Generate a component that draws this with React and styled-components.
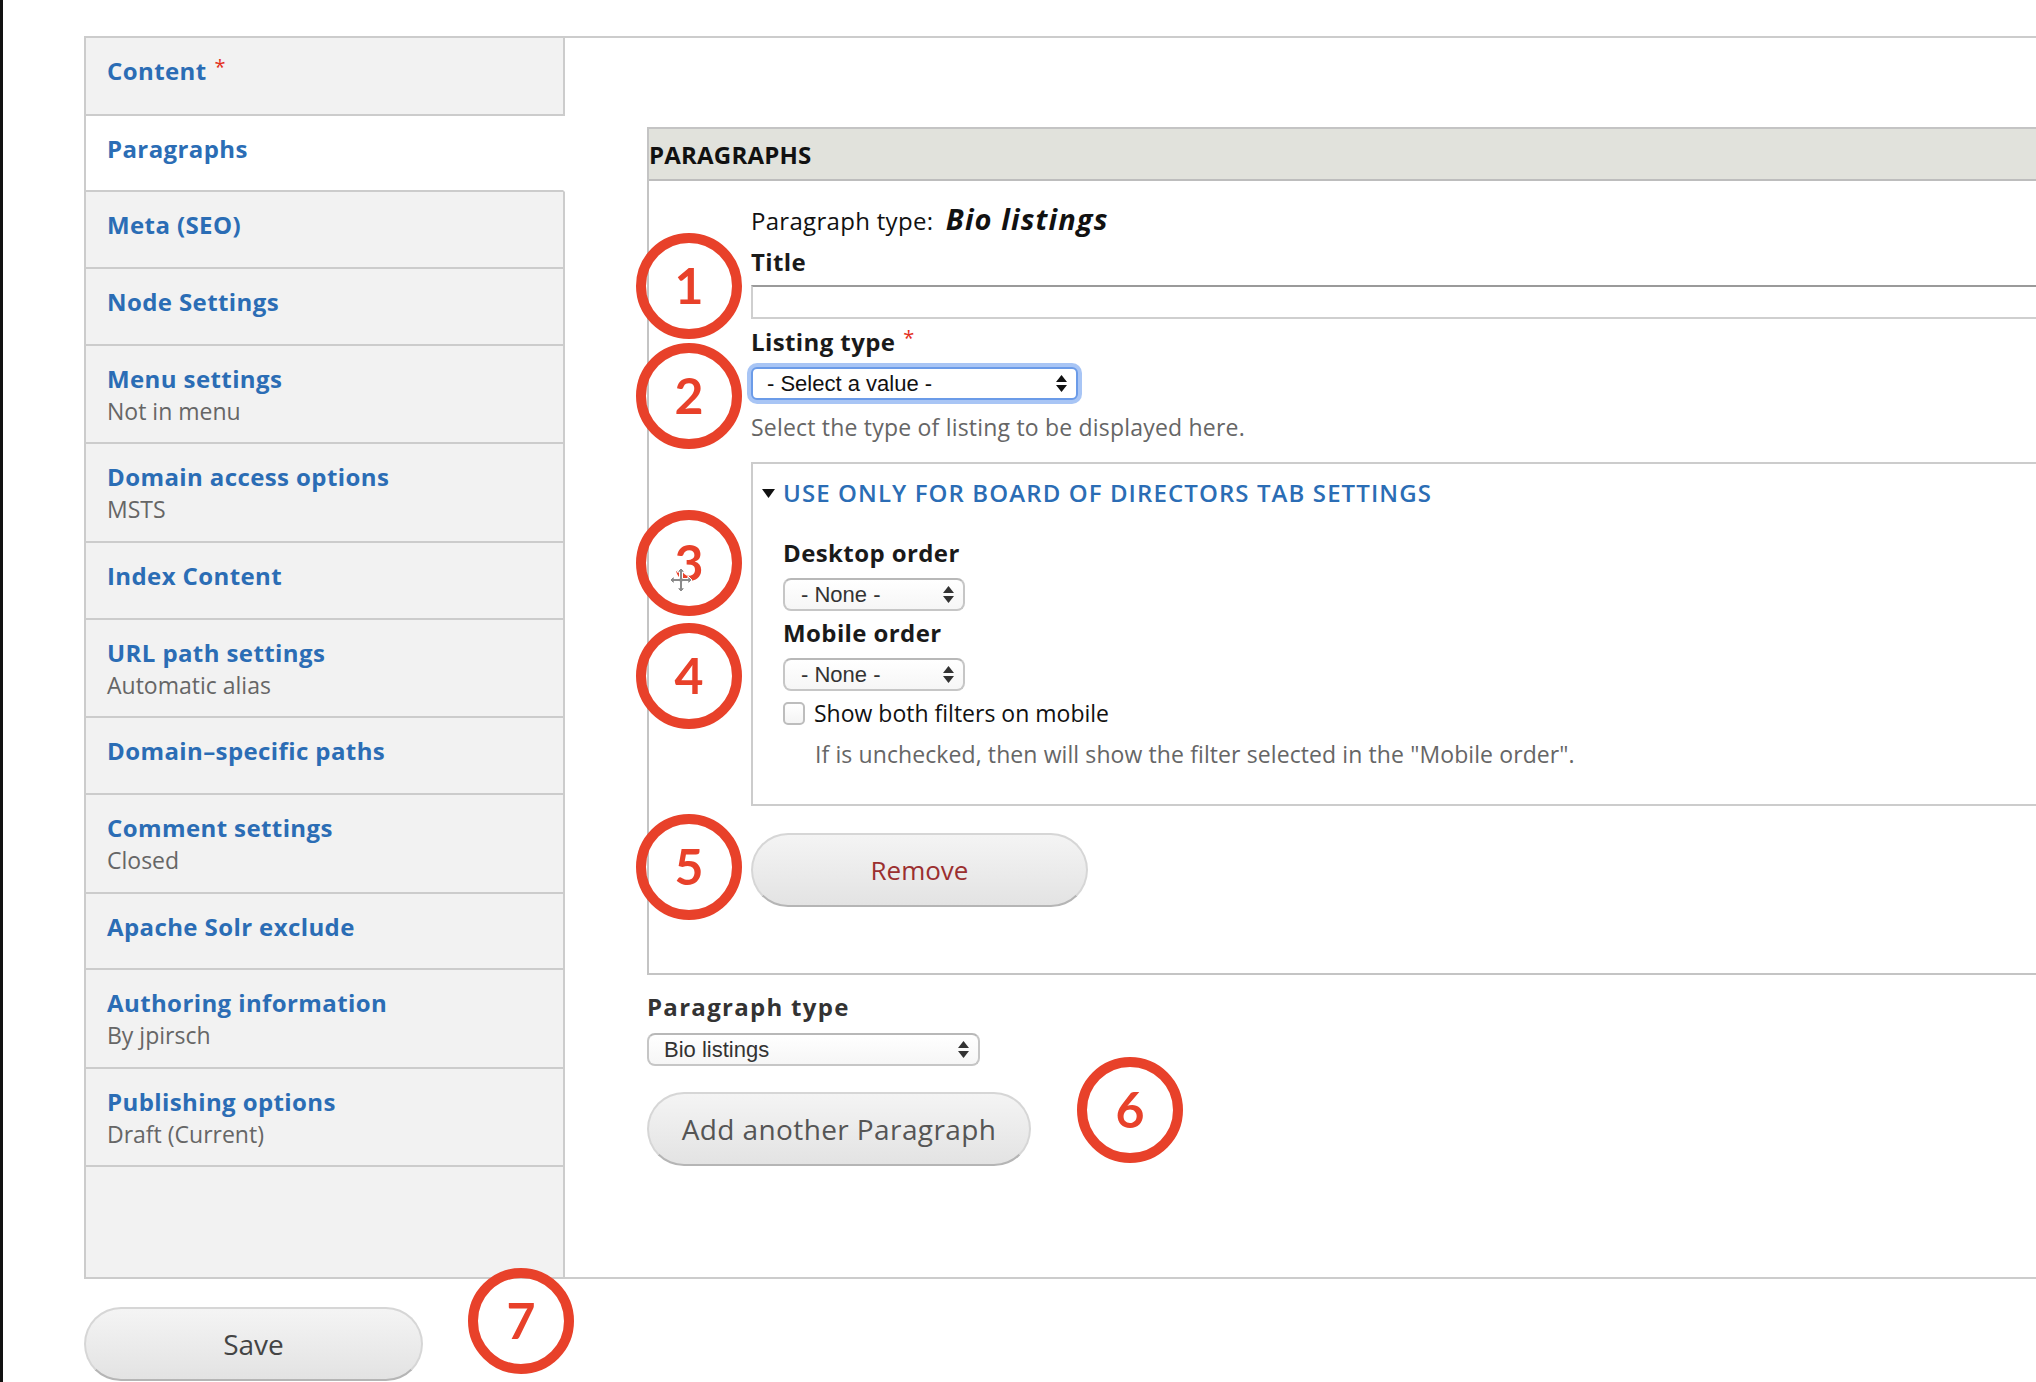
import React from 'react';
import styled, { createGlobalStyle } from 'styled-components';

const Global = createGlobalStyle`
  html, body { margin: 0; padding: 0; background: #fff; overflow: hidden; }
  body { font-family: "Open Sans", "DejaVu Sans", sans-serif; color: #222; }
  * { box-sizing: border-box; }
`;

const BLUE = '#2b6db5';
const RED = '#e8412a';

const Page = styled.div`
  position: relative;
  width: 2036px;
  height: 1382px;
  overflow: hidden;
  border-left: 3px solid #111;
  padding: 36px 0 0 81px;
`;

const Container = styled.div`
  display: flex;
  align-items: stretch;
  width: 2120px;
  border-top: 2px solid #ccc;
  border-left: 2px solid #ccc;
  border-bottom: 2px solid #ccc;
`;

const Sidebar = styled.nav`
  display: flex;
  flex-direction: column;
  width: 479px;
  flex: none;
`;

const Tab = styled.div`
  min-height: 76.6px;
  padding: 17px 20px 15.7px 21px;
  background: ${p => (p.$active ? '#fff' : '#f2f2f2')};
  border-bottom: 2px solid #ccc;
  border-right: 2px solid ${p => (p.$active ? 'transparent' : '#ccc')};

  &:first-child {
    min-height: 77.8px;
  }
`;

const TabTitle = styled.div`
  font-size: 24px;
  line-height: 32px;
  font-weight: 700;
  letter-spacing: 0.4px;
  color: ${BLUE};
`;

const TabSummary = styled.div`
  font-size: 23px;
  line-height: 32px;
  color: #666;
`;

const Req = styled.span`
  color: #e3301c;
  font-weight: 400;
  font-size: 20px;
  line-height: 1;
  margin-left: 8px;
  vertical-align: 6px;
`;

const SidebarFill = styled.div`
  flex: 1;
  background: #f2f2f2;
  border-right: 2px solid #ccc;
`;

const Pane = styled.main`
  flex: 1;
  padding: 89px 80px 111px 82px;
`;

const Fieldset = styled.section`
  border: 2px solid #c4c4c4;
`;

const FieldsetHeader = styled.div`
  height: 52px;
  line-height: 52px;
  background: #e1e2dc;
  border-bottom: 2px solid #bdbdbd;
  font-size: 24px;
  font-weight: 700;
  color: #111;
  letter-spacing: 0.2px;
`;

const FieldsetBody = styled.div`
  padding: 23px 20px 66px 102px;
  display: flex;
  flex-direction: column;
  align-items: flex-start;
`;

const TypeLine = styled.div`
  height: 32px;
  font-size: 24px;
  line-height: 32px;
  letter-spacing: 0.3px;
  color: #111;
  white-space: nowrap;
`;

const TypeName = styled.em`
  font-size: 29px;
  line-height: 1;
  font-weight: 700;
  font-style: italic;
  letter-spacing: 1.1px;
  margin-left: 6px;
`;

const Label = styled.div`
  font-size: 24px;
  line-height: 32px;
  font-weight: 700;
  letter-spacing: ${p => p.$ls ?? 0.4}px;
  color: ${p => p.$color || '#1a1a1a'};
  margin-top: ${p => p.$mt || 0}px;
  white-space: nowrap;
`;

const TextInput = styled.div`
  align-self: stretch;
  height: 34px;
  margin-top: 7px;
  border: 2px solid #cfcfcf;
  border-top-color: #9a9a9a;
  background: #fff;
`;

const Select = styled.div`
  display: flex;
  align-items: center;
  justify-content: space-between;
  width: ${p => p.$w}px;
  height: 33px;
  margin-top: ${p => p.$mt || 0}px;
  padding: 0 9px 0 ${p => p.$pl || 16}px;
  border: 2px solid #c6c6c6;
  border-top-color: #b8b8b8;
  border-radius: 8px;
  background: linear-gradient(#ffffff, #f6f6f6);
  font-family: "Liberation Sans", Arial, sans-serif;
  font-size: 22px;
  color: #333;
  white-space: nowrap;
`;

const FocusSelect = styled(Select)`
  border: 2px solid #6b9be8;
  border-radius: 6px;
  box-shadow: 0 0 0 4px rgba(110, 158, 238, 0.6);
  background: #fff;
  color: #111;
`;

const Description = styled.div`
  font-size: 23px;
  line-height: 32px;
  letter-spacing: ${p => p.$ls ?? 0.2}px;
  color: #666;
  margin-top: ${p => p.$mt || 0}px;
  margin-left: ${p => p.$ml || 0}px;
  white-space: nowrap;
`;

const InnerFieldset = styled.section`
  align-self: stretch;
  margin-top: 19px;
  border: 2px solid #cccccc;
  padding: 13px 20px 34px 30px;
  display: flex;
  flex-direction: column;
  align-items: flex-start;
`;

const Legend = styled.div`
  display: flex;
  align-items: center;
  gap: 8px;
  margin-left: -21px;
  font-size: 24px;
  line-height: 32px;
  font-weight: 600;
  letter-spacing: 1.1px;
  color: ${BLUE};
  text-transform: uppercase;
  white-space: nowrap;
`;

const CheckRow = styled.label`
  display: flex;
  align-items: center;
  gap: 9px;
  margin-top: 6px;
  height: 32px;
  font-size: 23px;
  color: #111;
  white-space: nowrap;
`;

const Checkbox = styled.span`
  display: block;
  width: 22px;
  height: 23px;
  border: 2px solid #bdbdbd;
  border-radius: 5px;
  background: linear-gradient(#fff, #f4f4f4);
`;

const Button = styled.button`
  display: flex;
  align-items: center;
  justify-content: center;
  width: ${p => p.$w}px;
  height: 74px;
  margin-top: ${p => p.$mt || 0}px;
  border: 2px solid #d6d6d6;
  border-bottom-color: #b5b5b5;
  border-radius: 40px;
  background: linear-gradient(#f4f4f4, #e3e3e3);
  font-family: "Open Sans", "DejaVu Sans", sans-serif;
  font-size: ${p => p.$fs || 27}px;
  letter-spacing: ${p => p.$ls || 0}px;
  color: ${p => p.$color || '#555'};
  padding: 0;
  cursor: pointer;
`;

const AfterBox = styled.div`
  display: flex;
  flex-direction: column;
  align-items: flex-start;
`;

const Ring = styled.div`
  position: absolute;
  left: ${p => p.$x - 53}px;
  top: ${p => p.$y - 53}px;
  width: 106px;
  height: 106px;
  border: 10px solid ${RED};
  border-radius: 50%;
  display: flex;
  align-items: center;
  justify-content: center;
  font-family: Lato, "Open Sans", sans-serif;
  font-weight: 700;
  font-size: 50px;
  line-height: 1;
  color: ${RED};
  padding-bottom: 2px;
`;

const Cursor = styled.svg`
  position: absolute;
  left: 666px;
  top: 567px;
`;

const Arrows = () => (
  <svg width="11" height="17" viewBox="0 0 11 17">
    <polygon points="0,7 5.5,0 11,7" fill="currentColor" />
    <polygon points="0,10 11,10 5.5,17" fill="currentColor" />
  </svg>
);

const tabs = [
  { title: 'Content', req: true },
  { title: 'Paragraphs', active: true },
  { title: 'Meta (SEO)' },
  { title: 'Node Settings' },
  { title: 'Menu settings', summary: 'Not in menu' },
  { title: 'Domain access options', summary: 'MSTS' },
  { title: 'Index Content' },
  { title: 'URL path settings', summary: 'Automatic alias' },
  { title: 'Domain\u2013specific paths' },
  { title: 'Comment settings', summary: 'Closed' },
  { title: 'Apache Solr exclude' },
  { title: 'Authoring information', summary: 'By jpirsch' },
  { title: 'Publishing options', summary: 'Draft (Current)' },
];

const rings = [
  { n: 1, x: 686, y: 286 },
  { n: 2, x: 686, y: 396 },
  { n: 3, x: 686, y: 563 },
  { n: 4, x: 686, y: 676 },
  { n: 5, x: 686, y: 867 },
  { n: 6, x: 1127, y: 1110 },
  { n: 7, x: 518, y: 1321 },
];

export default function App() {
  return (
    <>
      <Global />
      <Page>
        <Container>
          <Sidebar>
            {tabs.map(t => (
              <Tab key={t.title} $active={t.active}>
                <TabTitle>
                  {t.title}
                  {t.req && <Req>*</Req>}
                </TabTitle>
                {t.summary && <TabSummary>{t.summary}</TabSummary>}
              </Tab>
            ))}
            <SidebarFill />
          </Sidebar>
          <Pane>
            <Fieldset>
              <FieldsetHeader>PARAGRAPHS</FieldsetHeader>
              <FieldsetBody>
                <TypeLine>
                  Paragraph type: <TypeName>Bio listings</TypeName>
                </TypeLine>
                <Label $mt={10}>Title</Label>
                <TextInput />
                <Label $mt={7}>
                  Listing type<Req>*</Req>
                </Label>
                <FocusSelect $w={327} $mt={9} $pl={14}>
                  <span>- Select a value -</span>
                  <Arrows />
                </FocusSelect>
                <Description $mt={11}>Select the type of listing to be displayed here.</Description>
                <InnerFieldset>
                  <Legend>
                    <svg width="13" height="9" viewBox="0 0 13 9">
                      <polygon points="0,0 13,0 6.5,9" fill="#111" />
                    </svg>
                    Use only for Board of Directors tab settings
                  </Legend>
                  <Label $mt={28}>Desktop order</Label>
                  <Select $w={182} $mt={9} $pl={16}>
                    <span>- None -</span>
                    <Arrows />
                  </Select>
                  <Label $mt={6}>Mobile order</Label>
                  <Select $w={182} $mt={9} $pl={16}>
                    <span>- None -</span>
                    <Arrows />
                  </Select>
                  <CheckRow>
                    <Checkbox />
                    Show both filters on mobile
                  </CheckRow>
                  <Description $mt={9} $ml={32} $ls={0.1}>
                    If is unchecked, then will show the filter selected in the "Mobile order".
                  </Description>
                </InnerFieldset>
                <Button $w={337} $mt={27} $fs={26} $color="#9b2f2f">Remove</Button>
              </FieldsetBody>
            </Fieldset>
            <AfterBox>
              <Label $mt={16} $ls={1.3} $color="#333">Paragraph type</Label>
              <Select $w={333} $mt={10} $pl={15}>
                <span>Bio listings</span>
                <Arrows />
              </Select>
              <Button $w={384} $mt={26} $fs={28} $ls={0.4}>Add another Paragraph</Button>
            </AfterBox>
          </Pane>
        </Container>
        <Button $w={339} $mt={28} $fs={28} $color="#444">Save</Button>
        {rings.map(r => (
          <Ring key={r.n} $x={r.x} $y={r.y}>{r.n}</Ring>
        ))}
        <Cursor width="24" height="26" viewBox="0 0 24 26">
          <path
            d="M12 1 L16 5 H13.5 V11.5 H19 V9 L23 13 L19 17 V14.5 H13.5 V21 H16 L12 25 L8 21 H10.5 V14.5 H5 V17 L1 13 L5 9 V11.5 H10.5 V5 H8 Z"
            fill="#8a8a8a"
            stroke="#fff"
            strokeWidth="1"
          />
        </Cursor>
      </Page>
    </>
  );
}
